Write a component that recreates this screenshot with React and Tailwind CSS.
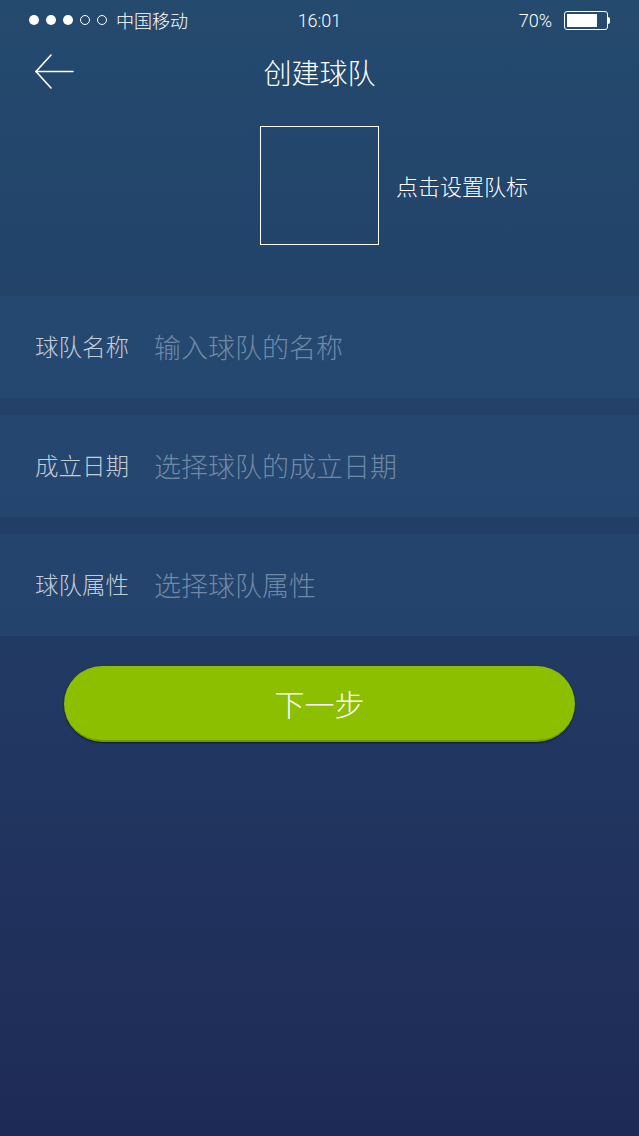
const cjk = { fontFamily: '"Noto Sans CJK SC", "Noto Sans", sans-serif' };

function StatusBar() {
  return (
    <div className="grid h-10 grid-cols-3 items-center px-[29px] text-[17px] text-white" style={cjk}>
      <div className="flex items-center gap-[7px]">
        <span className="h-[10px] w-[10px] rounded-full bg-white" />
        <span className="h-[10px] w-[10px] rounded-full bg-white" />
        <span className="h-[10px] w-[10px] rounded-full bg-white" />
        <span className="h-[10px] w-[10px] rounded-full border border-white" />
        <span className="h-[10px] w-[10px] rounded-full border border-white" />
        <span className="ml-[2px] text-[18px] font-light">中国移动</span>
      </div>
      <div className="justify-self-center font-['Roboto'] text-[18px] font-light">16:01</div>
      <div className="flex items-center justify-self-end gap-[12px]">
        <span className="font-['Roboto'] text-[18px] font-light">70%</span>
        <div className="flex items-center">
          <div className="h-[19px] w-[44px] rounded-[3px] border-[1.5px] border-white p-[2px]">
            <div className="h-full w-[78%] bg-white" />
          </div>
          <div className="h-[7px] w-[2px] rounded-r-sm bg-white" />
        </div>
      </div>
    </div>
  );
}

export default function App() {
  return (
    <div className="h-[1136px] w-full overflow-hidden bg-gradient-to-b from-[#244a6e] via-[#223d66] to-[#1e2a56]" style={cjk}>
      <StatusBar />

      {/* Nav */}
      <div className="grid h-16 grid-cols-[1fr_auto_1fr] items-center">
        <div className="pl-[35px]">
          <svg width="39" height="36" viewBox="0 0 39 36" fill="none" stroke="white" strokeWidth="1.6" strokeLinecap="round">
            <path d="M1 17.5 H38" />
            <path d="M1 17.5 L16 1" />
            <path d="M1 17.5 L16 34" />
          </svg>
        </div>
        <h1 className="text-[28px] font-light text-white">创建球队</h1>
        <div />
      </div>

      {/* Logo picker */}
      <div className="mt-[22px] grid grid-cols-[1fr_119px_1fr] items-center">
        <div />
        <div className="h-[119px] w-[119px] border border-white" />
        <div className="pl-[17px] text-[22px] font-light text-white">点击设置队标</div>
      </div>

      {/* Form rows */}
      <div className="mt-[51px] flex flex-col gap-[17px]">
        {[
          ['球队名称', '输入球队的名称'],
          ['成立日期', '选择球队的成立日期'],
          ['球队属性', '选择球队属性'],
        ].map(([label, hint]) => (
          <div key={label} className="flex h-[102px] items-center bg-[#2a5580]/30 pl-[35px]">
            <span className="text-[23.5px] font-light text-[#c4ccd6]">{label}</span>
            <span className="ml-[25px] text-[27px] font-light text-[#6f89a6]">{hint}</span>
          </div>
        ))}
      </div>

      {/* Next */}
      <div className="mx-[64px] mt-[30px]">
        <button className="flex h-[76px] w-full items-center justify-center rounded-full border-b-2 border-[#6f9a00] bg-[#8bbf00] text-[30px] font-light text-white shadow-[0_1px_2px_rgba(0,0,40,0.6)]">
          下一步
        </button>
      </div>
    </div>
  );
}
